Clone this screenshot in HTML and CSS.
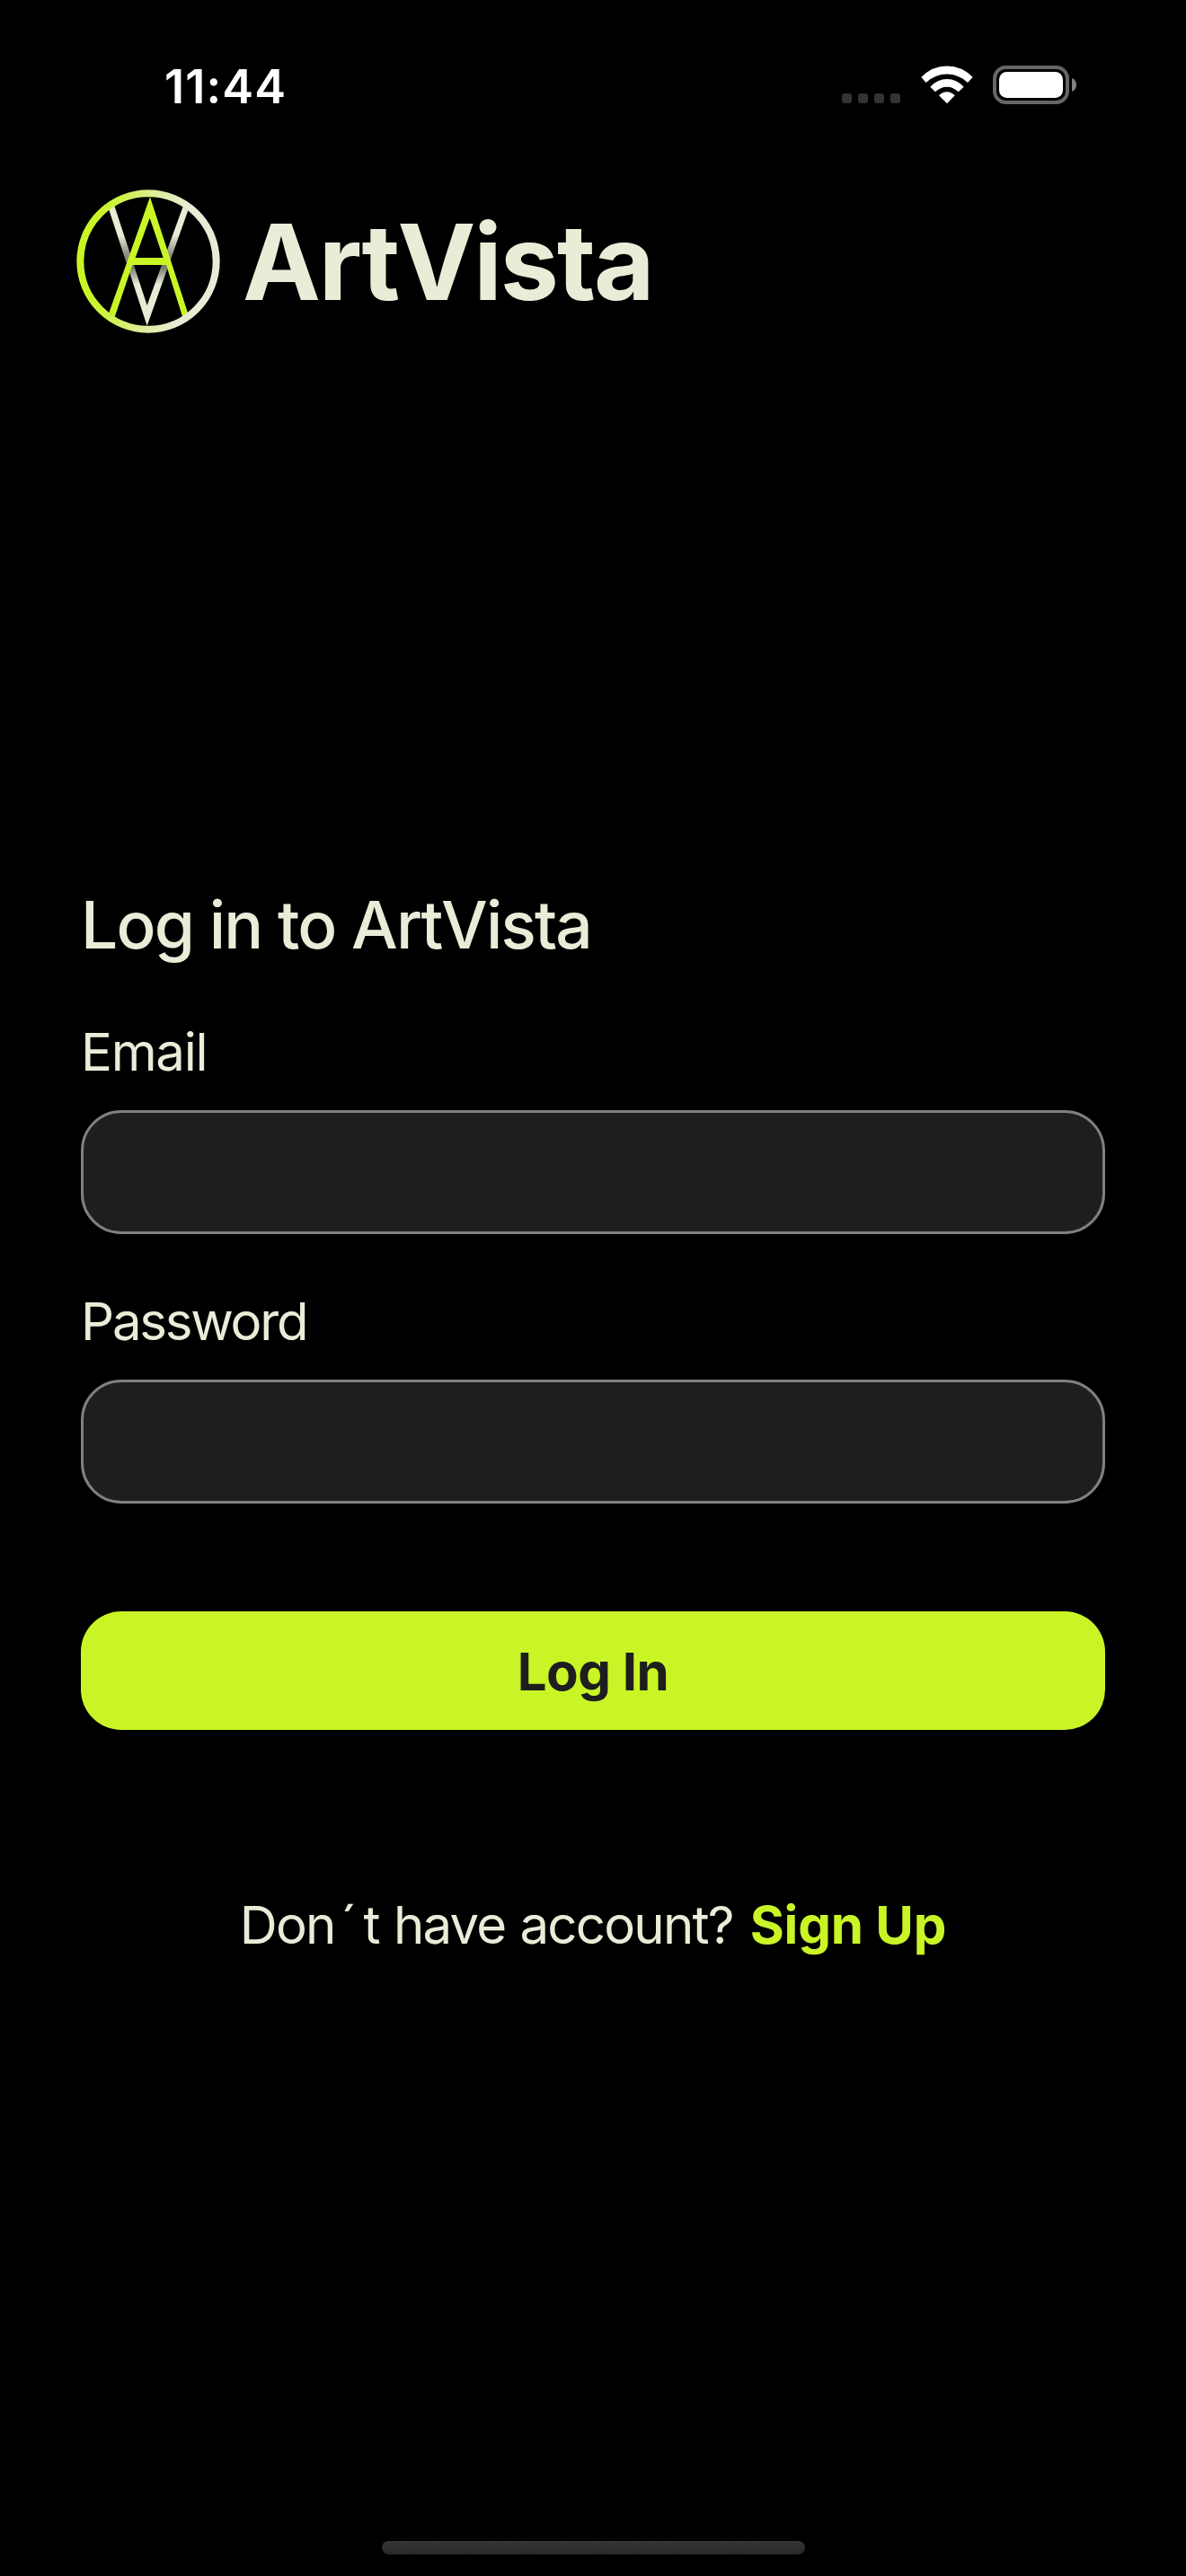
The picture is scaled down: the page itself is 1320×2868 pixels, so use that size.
FILE: index.html
```html
<!DOCTYPE html>
<html lang="en">
<head>
<meta charset="utf-8">
<title>ArtVista</title>
<link rel="stylesheet" href="styles.css">
</head>
<body>
<div class="screen">
  <div class="status-bar">
    <span class="time">11:44</span>
    <div class="status-icons">
      <svg class="signal" width="65" height="11" viewBox="0 0 65 11" fill="#333">
        <rect width="11" height="11" rx="3.2"/><rect x="18" width="11" height="11" rx="3.2"/>
        <rect x="36" width="11" height="11" rx="3.2"/><rect x="54" width="11" height="11" rx="3.2"/>
      </svg>
      <svg class="wifi" width="58" height="43" viewBox="314 68 174 129" fill="#fff">
        <path d="M315 107 Q351 69.500 401 69.500 Q451 69.500 487 107 L470 125 Q440 96.500 401 96.500 Q361 96.500 331 125 Z"/>
        <path d="M345 139 Q369 113 401 113 Q433 113 457 139 L439 156 Q422 139 401 139 Q379 139 362 156 Z"/>
        <path d="M374 168 Q386 156 401 156 Q415 156 427 168 L401 195 Z"/>
      </svg>
      <svg class="battery" width="94" height="43" viewBox="0 0 94 43">
        <rect x="2" y="2" width="81" height="39" rx="12.500" fill="none" stroke="#666" stroke-width="4"/>
        <rect x="7" y="7" width="71" height="29" rx="8.500" fill="#fff"/>
        <path d="M88 14 Q93 16 93 21.500 Q93 27 88 29 Z" fill="#808080"/>
      </svg>
    </div>
  </div>

  <header class="brand">
    <svg class="logo" width="160" height="160" viewBox="45 48 480 480">
      <defs>
        <linearGradient id="ring" gradientUnits="userSpaceOnUse" x1="90" y1="270" x2="400" y2="300">
          <stop offset="0" stop-color="#c9f526"/><stop offset=".25" stop-color="#cdf244"/>
          <stop offset=".6" stop-color="#dcef94"/><stop offset="1" stop-color="#e7ecd6"/>
        </linearGradient>
        <linearGradient id="vee" gradientUnits="userSpaceOnUse" x1="0" y1="200" x2="0" y2="365">
          <stop offset="0" stop-color="#e7ecd6"/><stop offset=".4" stop-color="#8a8d80"/>
          <stop offset=".65" stop-color="#74776b"/><stop offset="1" stop-color="#e7ecd6"/>
        </linearGradient>
      </defs>
      <path d="M153 113 L281 503 L418 118 L401 105 L281 435 L172 102 Z" fill="url(#vee)"/>
      <path d="M291 73 L418 463 L399 472 L345 300 H232 L173 474 L154 460 Z M290 143 L242 276 H335 Z" fill="#c9f526" fill-rule="evenodd"/>
      <circle cx="285" cy="288" r="227" fill="none" stroke="url(#ring)" stroke-width="24"/>
    </svg>
    <span class="brand-name">ArtVista</span>
  </header>

  <main class="login">
    <h1 class="title">Log in to ArtVista</h1>
    <div class="field">
      <label class="label label-email" for="email">Email</label>
      <input class="input" id="email" type="email">
    </div>
    <div class="field">
      <label class="label label-password" for="password">Password</label>
      <input class="input" id="password" type="password">
    </div>
    <button class="submit" type="button">Log In</button>
    <p class="signup"><span class="prompt">Don<span class="accent">´</span>t have account?</span><a class="link">Sign Up</a></p>
  </main>

  <div class="home-indicator"></div>
</div>
</body>
</html>
```
FILE: styles.css
```css
* {
  box-sizing: border-box;
}

body {
  margin: 0;
  background: #000;
  color: #e8edd8;
  font-family: Inter, "Liberation Sans", sans-serif;
}

.screen {
  width: 1320px;
  height: 2868px;
  display: flex;
  flex-direction: column;
  overflow: hidden;
}

.status-bar {
  display: flex;
  justify-content: space-between;
  align-items: flex-start;
  height: 211px;
  padding: 65px 121px 0 183px;
  color: #fff;
}

.time {
  font-size: 52.3px;
  line-height: 62px;
  font-weight: 600;
  letter-spacing: 1.1px;
}

.status-icons {
  display: flex;
  align-items: flex-end;
  padding-top: 8px;
}

.signal {
  margin-right: 23px;
  margin-bottom: 1px;
}

.wifi {
  margin-right: 22px;
}

.brand {
  display: flex;
  align-items: center;
  gap: 25px;
  padding-left: 85px;
}

.brand-name {
  padding-top: 1px;
  font-size: 116.4px;
  line-height: 142px;
  font-weight: 700;
  letter-spacing: -2.07px;
}

.login {
  flex: 1;
  display: flex;
  flex-direction: column;
  padding: 614px 90px 0;
}

.title {
  margin: 0;
  font-size: 73px;
  line-height: 90px;
  font-weight: 500;
  letter-spacing: -1.85px;
}

.field {
  display: flex;
  flex-direction: column;
  gap: 30px;
  margin-top: 62px;
}

.title + .field {
  margin-top: 61px;
}

.label {
  font-size: 58.2px;
  line-height: 70px;
}

.label-email {
  letter-spacing: -1.3px;
}

.label-password {
  letter-spacing: -2.25px;
}

.input {
  height: 138px;
  margin: 0;
  padding: 0 36px;
  border: 3px solid #808080;
  border-radius: 45px;
  background: #1e1e1e;
  color: inherit;
  font: inherit;
  font-size: 58.2px;
  outline: none;
}

.submit {
  height: 132px;
  margin: 120px 0 0;
  padding: 1px 0 0;
  border: 0;
  border-radius: 45px;
  background: #c9f526;
  color: #1e1e1e;
  font: 700 58.2px/70px Inter, "Liberation Sans", sans-serif;
  letter-spacing: -0.5px;
}

.signup {
  display: flex;
  justify-content: center;
  gap: 19px;
  margin: 182px 0 0;
  font-size: 58.2px;
  line-height: 70px;
}

.prompt {
  letter-spacing: -1.8px;
  word-spacing: 1.5px;
}

.accent {
  margin: 0 9px 0 6px;
}

.link {
  color: #c9f526;
  font-weight: 700;
  letter-spacing: -0.2px;
}

.home-indicator {
  width: 471px;
  height: 15px;
  margin: 0 auto 24px;
  border-radius: 8px;
  background: linear-gradient(#363636, #282828);
}
```
